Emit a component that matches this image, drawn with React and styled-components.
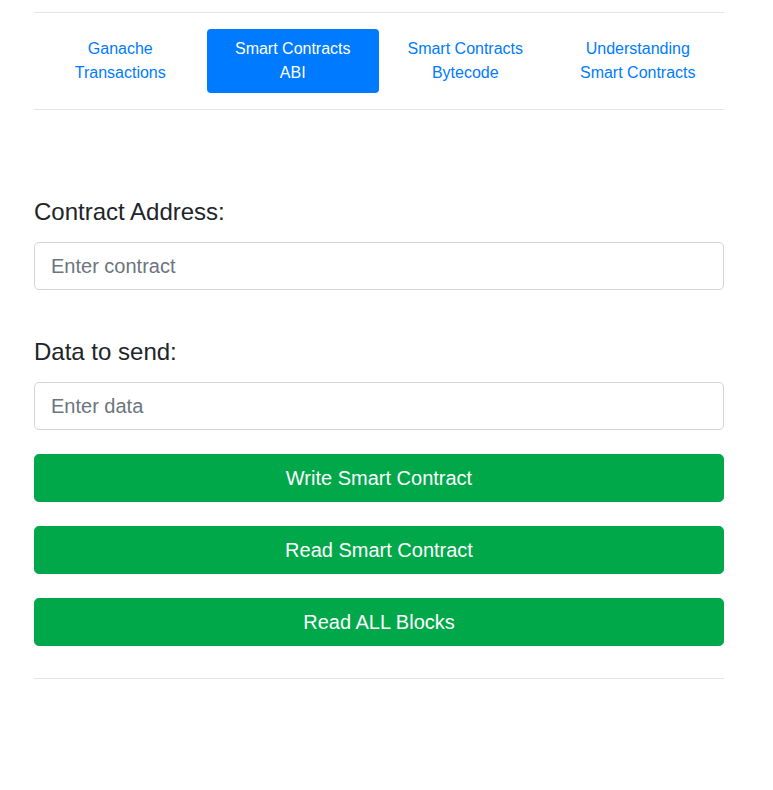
import React from "react";
import styled, { createGlobalStyle } from "styled-components";

const Global = createGlobalStyle`
  html, body { margin: 0; padding: 0; background: #fff; }
  body {
    font-family: "Liberation Sans", Arial, sans-serif;
    color: #212529;
    font-size: 16px;
    line-height: 1.5;
  }
  * { box-sizing: border-box; }
`;

const Page = styled.div`
  width: 690px;
  margin-left: 34px;
  padding-top: 12px;
`;

const Rule = styled.hr`
  margin: 0;
  border: 0;
  border-top: 1px solid rgba(0, 0, 0, 0.1);
  height: 0;
`;

const Nav = styled.nav`
  display: grid;
  grid-template-columns: repeat(4, 1fr);
  margin: 16px 0;
`;

const NavItem = styled.a`
  display: block;
  text-align: center;
  padding: 8px 16px;
  font-size: 16px;
  line-height: 24px;
  border-radius: 4px;
  text-decoration: none;
  color: ${(p) => (p.$active ? "#fff" : "#007bff")};
  background: ${(p) => (p.$active ? "#007bff" : "transparent")};
  cursor: pointer;
`;

const Form = styled.section`
  display: flex;
  flex-direction: column;
  padding-top: 88px;
  padding-bottom: 32px;
`;

const Label = styled.label`
  display: block;
  font-size: 24px;
  line-height: 28.8px;
  margin: ${(p) => (p.$first ? "0" : "48px")} 0 15px;
  color: #212529;
`;

const Input = styled.input`
  display: block;
  width: 100%;
  height: 48px;
  padding: 9px 16px 7px;
  font-family: inherit;
  font-size: 20px;
  line-height: 1.5;
  color: #495057;
  background: #fff;
  border: 1px solid #ced4da;
  border-radius: 4.8px;
  outline: none;
  &::placeholder { color: #6c757d; opacity: 1; }
`;

const Button = styled.button`
  display: block;
  width: 100%;
  height: 48px;
  margin-top: 24px;
  padding: 8px 16px;
  font-family: inherit;
  font-size: 20px;
  line-height: 1.5;
  color: #fff;
  background: #00a84a;
  border: 1px solid #00a84a;
  border-radius: 4.8px;
  cursor: pointer;
`;

const tabs = [
  ["Ganache", "Transactions"],
  ["Smart Contracts", "ABI"],
  ["Smart Contracts", "Bytecode"],
  ["Understanding", "Smart Contracts"],
];

export default function App() {
  return (
    <>
      <Global />
      <Page>
        <Rule />
        <Nav>
          {tabs.map(([a, b], i) => (
            <NavItem key={i} $active={i === 1}>
              {a}
              <br />
              {b}
            </NavItem>
          ))}
        </Nav>
        <Rule />
        <Form>
          <Label $first>Contract Address:</Label>
          <Input placeholder="Enter contract" />
          <Label>Data to send:</Label>
          <Input placeholder="Enter data" />
          <Button>Write Smart Contract</Button>
          <Button>Read Smart Contract</Button>
          <Button>Read ALL Blocks</Button>
        </Form>
        <Rule />
      </Page>
    </>
  );
}
